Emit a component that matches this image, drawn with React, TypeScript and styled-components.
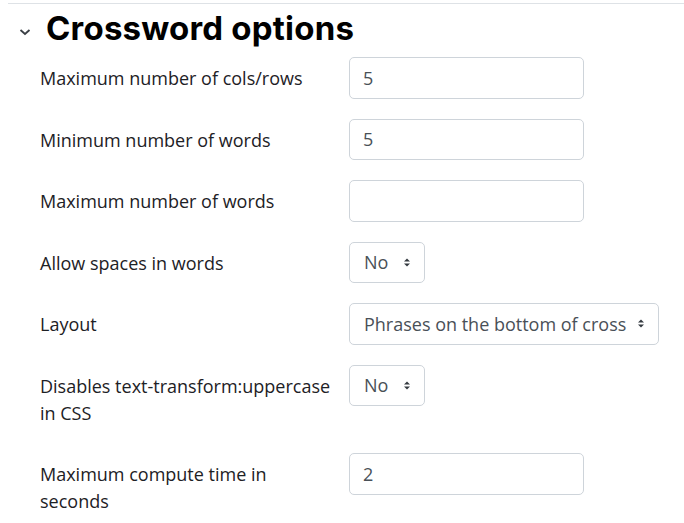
import React from "react";
import styled, { createGlobalStyle } from "styled-components";

const GlobalStyle = createGlobalStyle`
  body {
    margin: 0;
    background: #fff;
    font-family: "Open Sans", "Liberation Sans", sans-serif;
    color: #1d2125;
  }
`;

const Fieldset = styled.section`
  margin: 3px 0 0 8px;
  border-top: 1px solid #dee2e6;
`;

const Legend = styled.div`
  display: flex;
  align-items: center;
  gap: 15px;
  height: 51px;
  padding-left: 11px;
`;

const Title = styled.h3`
  margin: 0;
  font-family: "Inter", "Open Sans", sans-serif;
  font-weight: 700;
  font-size: 33px;
  letter-spacing: 0.2px;
  color: #000;
  line-height: 1;
  padding-bottom: 2px;
`;

const Rows = styled.div`
  padding: 2px 0 0 32px;
`;

const Row = styled.div`
  display: grid;
  grid-template-columns: 309px auto;
  align-items: start;
  margin-bottom: 20px;
`;

const Label = styled.label`
  padding: 8px 15px 6.5px 0;
  font-size: 18px;
  line-height: 27px;
  color: #1d2125;
`;

const TextInput = styled.div`
  box-sizing: border-box;
  width: 235px;
  height: 41.5px;
  padding: 0 13px;
  display: flex;
  align-items: center;
  border: 1px solid #ced4da;
  border-radius: 5px;
  font-size: 18px;
  color: #495057;
`;

const Select = styled.div<{ $width: number }>`
  box-sizing: border-box;
  width: ${(p) => p.$width}px;
  height: 41.5px;
  padding: 0 13px 0 14px;
  display: flex;
  align-items: center;
  justify-content: space-between;
  border: 1px solid #ced4da;
  border-radius: 5px;
  font-size: 18px;
  color: #495057;
  white-space: nowrap;
`;

const Arrows = () => (
  <svg width="8" height="9" viewBox="0 0 8 9">
    <path d="M1 3.5 L4 0.5 L7 3.5 Z" fill="#343a40" />
    <path d="M1 5.5 L4 8.5 L7 5.5 Z" fill="#343a40" />
  </svg>
);

const Chevron = () => (
  <svg width="12" height="8" viewBox="0 0 12 8" style={{ marginTop: 4 }}>
    <path d="M1.5 2 L6 6 L10.5 2" fill="none" stroke="#3a3f45" strokeWidth="1.8" />
  </svg>
);

type Field =
  | { label: React.ReactNode; kind: "text"; value: string }
  | { label: React.ReactNode; kind: "select"; value: string; width: number };

const fields: Field[] = [
  { label: "Maximum number of cols/rows", kind: "text", value: "5" },
  { label: "Minimum number of words", kind: "text", value: "5" },
  { label: "Maximum number of words", kind: "text", value: "" },
  { label: "Allow spaces in words", kind: "select", value: "No", width: 76 },
  { label: "Layout", kind: "select", value: "Phrases on the bottom of cross", width: 310 },
  { label: "Disables text-transform:uppercase in CSS", kind: "select", value: "No", width: 76 },
  { label: "Maximum compute time in seconds", kind: "text", value: "2" },
];

export default function App() {
  return (
    <>
      <GlobalStyle />
      <Fieldset>
        <Legend>
          <Chevron />
          <Title>Crossword options</Title>
        </Legend>
        <Rows>
          {fields.map((f, i) => (
            <Row key={i}>
              <Label>{f.label}</Label>
              {f.kind === "text" ? (
                <TextInput>{f.value}</TextInput>
              ) : (
                <Select $width={f.width}>
                  <span>{f.value}</span>
                  <Arrows />
                </Select>
              )}
            </Row>
          ))}
        </Rows>
      </Fieldset>
    </>
  );
}
